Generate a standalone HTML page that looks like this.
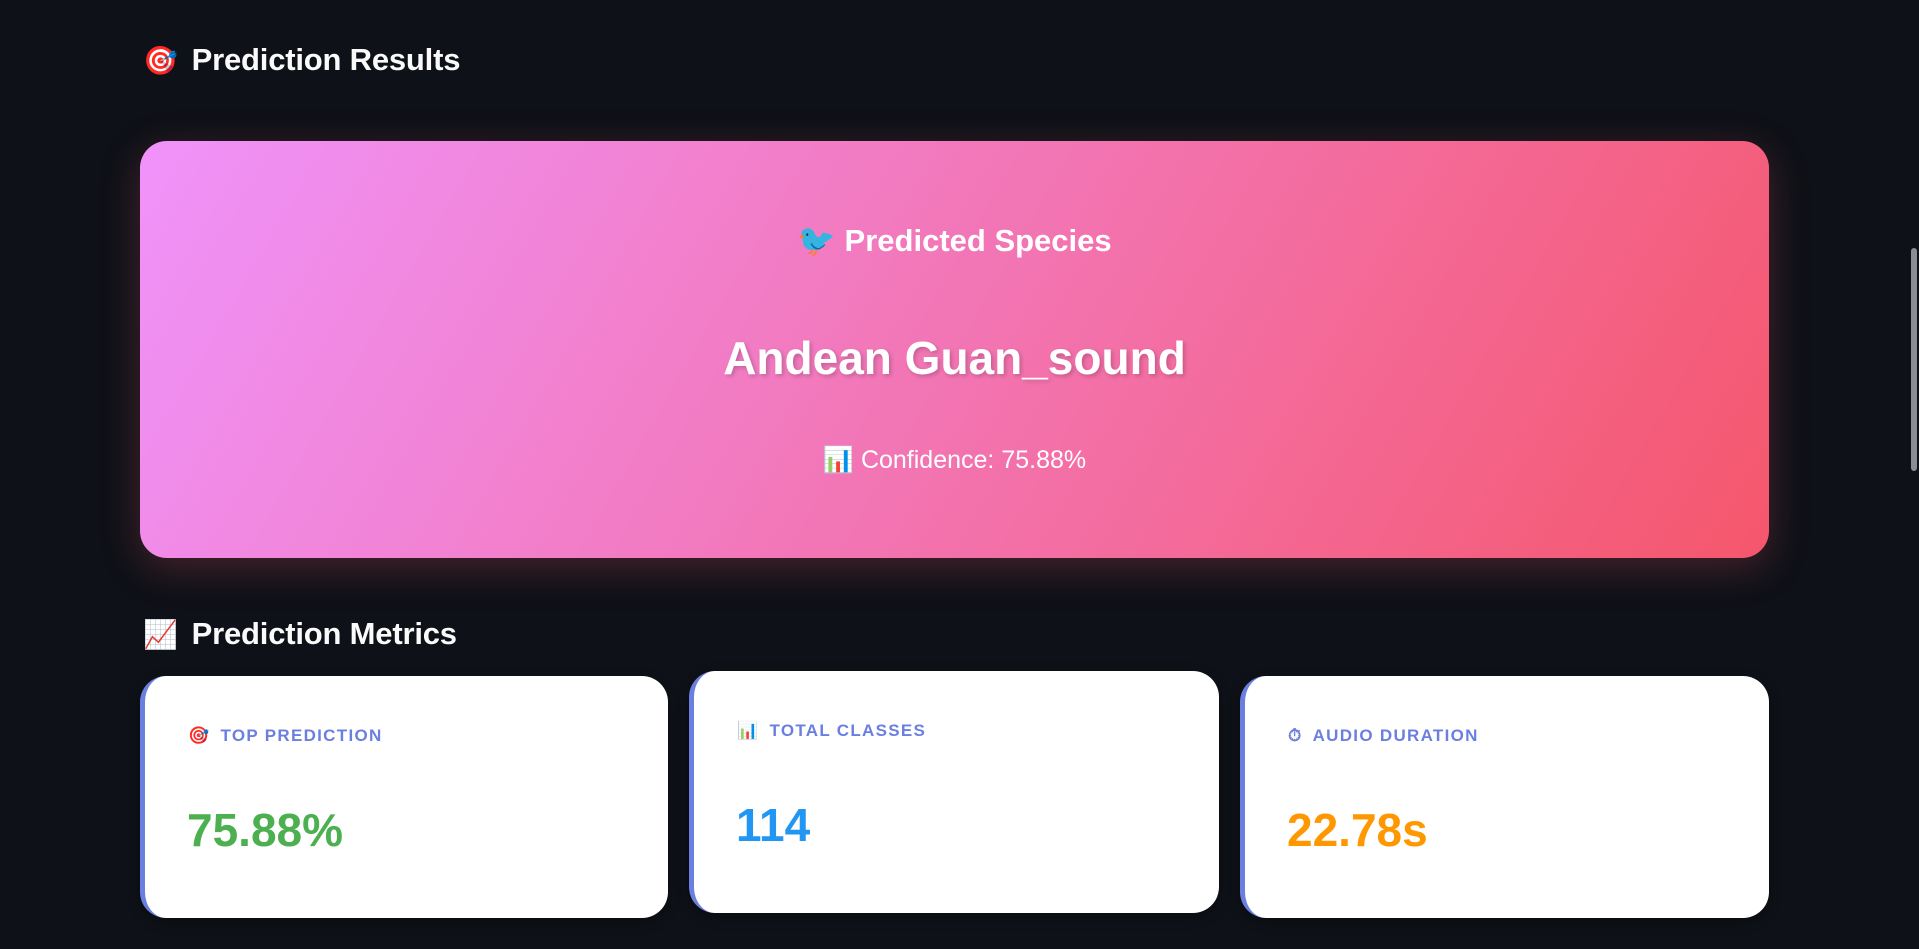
<!DOCTYPE html>
<html><head><meta charset="utf-8"><style>
html,body{margin:0;padding:0;width:1919px;height:949px;overflow:hidden;background:#0e1117;font-family:"Liberation Sans","Noto Sans CJK JP",sans-serif;color:#fafafa}
.h{position:absolute;left:143px;font-size:31px;font-weight:bold;display:flex;align-items:center;gap:14px;letter-spacing:-0.2px}
.hero{position:absolute;left:140px;top:141px;width:1629px;height:417px;border-radius:27px;background:linear-gradient(120deg,#f093fb 0%,#f5576c 100%);box-shadow:0 10px 40px rgba(245,87,108,0.25);text-align:center;color:#fff}
.card{position:absolute;background:#fff;border-radius:26px;border-left:5px solid #6b7fe0;box-shadow:0 4px 12px rgba(0,0,0,.3)}
.lab{position:absolute;left:43px;font-size:17px;font-weight:bold;color:#6b7fe0;letter-spacing:1.3px;display:flex;align-items:center;gap:10px}
.val{position:absolute;left:42px;font-size:46px;font-weight:bold}
.sb{position:absolute;left:1911px;top:248px;width:6px;height:223px;border-radius:3px;background:#8b8d93}
</style></head><body>
<div class="h" style="top:42px"><span style="font-size:28px">🎯</span><span>Prediction Results</span></div>
<div class="hero">
<div style="position:absolute;left:0;right:0;top:81px;font-size:31px;font-weight:bold">🐦 Predicted Species</div>
<div style="position:absolute;left:0;right:0;top:190px;font-size:46px;font-weight:bold;text-shadow:2px 2px 4px rgba(0,0,0,.2)">Andean Guan_sound</div>
<div style="position:absolute;left:0;right:0;top:305px;font-size:25px">📊 Confidence: 75.88%</div>
</div>
<div class="h" style="top:616px"><span style="font-size:28px">📈</span><span>Prediction Metrics</span></div>
<div class="card" style="left:140px;top:676px;width:523px;height:242px">
<div class="lab" style="top:50px"><span>🎯</span>TOP PREDICTION</div>
<div class="val" style="top:127px;color:#4caf50">75.88%</div></div>
<div class="card" style="left:689px;top:671px;width:525px;height:242px">
<div class="lab" style="top:50px"><span>📊</span>TOTAL CLASSES</div>
<div class="val" style="top:127px;color:#2196f3">114</div></div>
<div class="card" style="left:1240px;top:676px;width:524px;height:242px">
<div class="lab" style="top:50px"><span>⏱</span>AUDIO DURATION</div>
<div class="val" style="top:127px;color:#ff9800">22.78s</div></div>
<div class="sb"></div>
</body></html>
